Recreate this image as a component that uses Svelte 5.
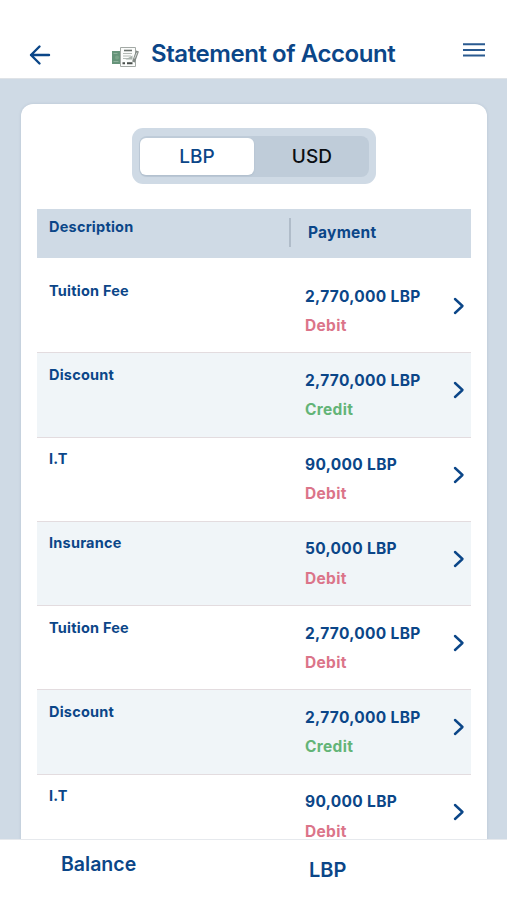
<script>
  let currency = $state('LBP');

  const currencies = ['LBP', 'USD'];

  const rows = [
    { description: 'Tuition Fee', amount: '2,770,000', type: 'Debit' },
    { description: 'Discount', amount: '2,770,000', type: 'Credit' },
    { description: 'I.T', amount: '90,000', type: 'Debit' },
    { description: 'Insurance', amount: '50,000', type: 'Debit' },
    { description: 'Tuition Fee', amount: '2,770,000', type: 'Debit' },
    { description: 'Discount', amount: '2,770,000', type: 'Credit' },
    { description: 'I.T', amount: '90,000', type: 'Debit' }
  ];
</script>

<div class="screen">
  <header>
    <button class="back" aria-label="Back">
      <svg width="22" height="22" viewBox="0 0 22 22">
        <path d="M20 11H2M10.500 2.500L2 11l8.500 8.500" />
      </svg>
    </button>
    <div class="title">
      <svg class="statement" width="30" height="24" viewBox="0 0 30 24">
        <rect x="1" y="6" width="11" height="13" fill="#66947a" />
        <path d="M2.500 8.500h4M2.500 16.500h5" stroke="#8fb39c" stroke-width="1" />
        <circle cx="6" cy="12.500" r="2" fill="#7aa489" />
        <path d="M9.500 2.500h15v19h-15z" fill="#fbfcfb" stroke="#a3a9a5" stroke-width="1" />
        <path d="M13 5.500h8" stroke="#6b726e" stroke-width="1.600" />
        <path d="M12 8.500h9M12 11h8M12 13.500h6" stroke="#b4bab6" stroke-width="1" />
        <path d="M14.500 14.500l7-4v4z" fill="#a9b3ad" />
        <path d="M11.500 18.300h2.500M16 18.300h5.500" stroke="#484e4b" stroke-width="2" />
        <path d="M26.500 6l-4 11" stroke="#838a86" stroke-width="3" />
        <path d="M26 7.500l-2.500 6" stroke="#d8dcda" stroke-width="1" />
      </svg>
      <h1>Statement of Account</h1>
    </div>
    <button class="menu" aria-label="Menu">
      <svg width="22" height="14" viewBox="0 0 22 14">
        <path d="M0 1.200h22M0 7h22M0 12.500h22" />
      </svg>
    </button>
  </header>

  <main>
    <section class="card">
      <div class="switch">
        <div class="track">
          {#each currencies as name}
            <button class:active={currency === name} onclick={() => (currency = name)}>
              {name}
            </button>
          {/each}
        </div>
      </div>

      <div class="table-head">
        <span class="description">Description</span>
        <span class="payment">Payment</span>
      </div>

      <ul>
        {#each rows as row}
          <li>
            <span class="description">{row.description}</span>
            <div class="payment">
              <span>{row.amount} LBP</span>
              <span class={row.type.toLowerCase()}>{row.type}</span>
            </div>
            <svg class="chevron" width="12" height="18" viewBox="0 0 12 18">
              <path d="M2 2l7.500 7L2 16" />
            </svg>
          </li>
        {/each}
      </ul>
    </section>
  </main>

  <footer>
    <span class="balance">Balance</span>
    <span class="total">{currency}</span>
  </footer>
</div>

<style>
  :global(body) {
    margin: 0;
  }

  .screen {
    width: 507px;
    height: 900px;
    display: flex;
    flex-direction: column;
    overflow: hidden;
    background: #fff;
    color: #0b4688;
    font-family: Inter, 'Liberation Sans', sans-serif;
    font-weight: 600;
  }

  button {
    padding: 0;
    border: none;
    background: none;
    font: inherit;
    color: inherit;
  }

  svg {
    display: block;
    fill: none;
  }

  header {
    flex: none;
    box-sizing: border-box;
    height: 79px;
    padding: 38px 22px 0 29px;
    display: flex;
    align-items: flex-start;
    border-bottom: 1px solid #dfe3e7;
  }

  .back {
    margin-top: 6px;
  }

  .back path {
    stroke: #0b4688;
    stroke-width: 2.4;
    stroke-linecap: round;
    stroke-linejoin: round;
  }

  .title {
    flex: 1;
    display: flex;
    align-items: flex-start;
    margin-left: 60px;
  }

  .statement {
    margin-top: 7px;
  }

  h1 {
    margin: 1px 0 0 10px;
    font-size: 24px;
    font-weight: 600;
    line-height: 30px;
    letter-spacing: -0.43px;
    white-space: nowrap;
  }

  .menu {
    margin-top: 5px;
  }

  .menu path {
    stroke: #2a5a90;
    stroke-width: 2;
  }

  main {
    flex: 1;
    min-height: 0;
    overflow: hidden;
    padding: 25px 20px 0 21px;
    background: #cfdae5;
  }

  .card {
    box-sizing: border-box;
    height: 800px;
    padding: 24px 16px 0;
    border-radius: 12px;
    background: #fff;
    box-shadow: 0 0 3px rgba(80, 100, 130, 0.18);
  }

  .switch {
    box-sizing: border-box;
    width: 244px;
    height: 56px;
    margin: 0 0 0 95px;
    padding: 8px 7px;
    border-radius: 11px;
    background: #cfdae5;
  }

  .track {
    height: 41px;
    display: flex;
    border-radius: 8px;
    background: #bfccd9;
  }

  .track button {
    box-sizing: border-box;
    flex: 1;
    height: 37px;
    margin: 2px 0 0 1px;
    border-radius: 6px;
    font-size: 19px;
    font-weight: 500;
    line-height: 38px;
    letter-spacing: 0.1px;
    color: #0b0e12;
  }

  .track button.active {
    background: #fff;
    color: #0b4688;
    box-shadow: 0 1px 2px rgba(60, 80, 110, 0.12);
  }

  .table-head {
    display: flex;
    height: 49px;
    margin: 25px 0 11px;
    background: #cfdae5;
  }

  .description {
    width: 240px;
    margin: 8px 0 0 12px;
    font-size: 14.5px;
    font-weight: 700;
    line-height: 20px;
    letter-spacing: 0.22px;
  }

  .table-head .payment {
    height: 29px;
    margin-top: 9px;
    padding-left: 17px;
    border-left: 2px solid #b0bcc9;
    font-size: 15.5px;
    font-weight: 700;
    line-height: 29px;
    letter-spacing: 0.25px;
  }

  ul {
    margin: 0;
    padding: 0;
    list-style: none;
  }

  li {
    box-sizing: border-box;
    display: flex;
    height: 84.3px;
    border-bottom: 1px solid #e3dcdf;
  }

  li:nth-child(even) {
    background: #f0f5f8;
  }

  li .description {
    width: 256px;
    margin-top: 11.5px;
  }

  li .payment {
    flex: 1;
    display: flex;
    flex-direction: column;
    padding-top: 12.6px;
    font-size: 15.5px;
    font-weight: 700;
    line-height: 29.2px;
    letter-spacing: 0.32px;
  }

  .debit {
    color: #db7489;
  }

  .credit {
    color: #63b477;
  }

  .chevron {
    margin: 28px 6px 0 0;
  }

  .chevron path {
    stroke: #0b4688;
    stroke-width: 2.4;
    stroke-linecap: round;
    stroke-linejoin: round;
  }

  footer {
    flex: none;
    box-sizing: border-box;
    height: 61px;
    padding-left: 61px;
    display: flex;
    border-top: 1px solid #e6e9ed;
    font-size: 19.5px;
    line-height: 24px;
  }

  .balance {
    width: 248px;
    margin-top: 12px;
  }

  .total {
    margin-top: 18px;
    font-size: 20px;
  }
</style>
